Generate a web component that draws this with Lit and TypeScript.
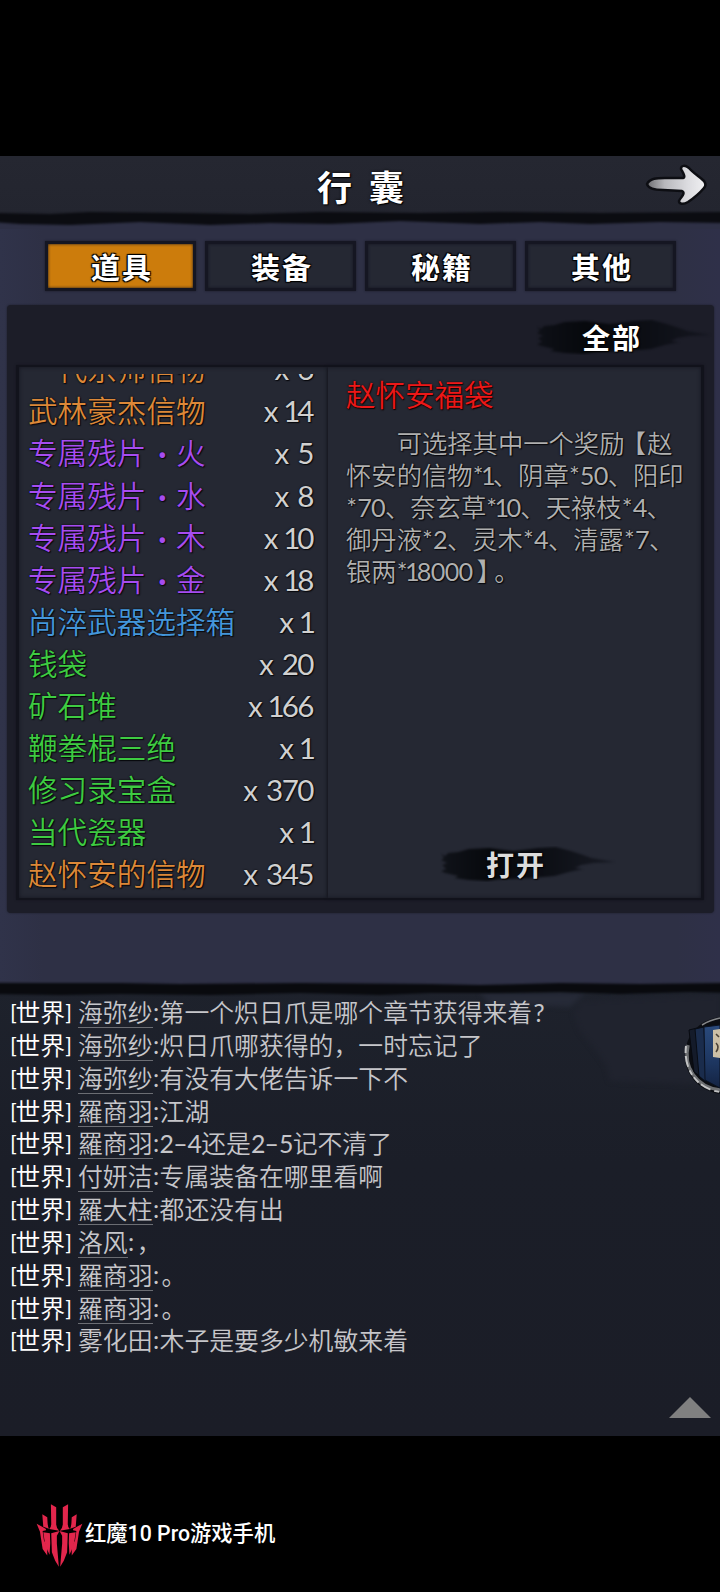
import { LitElement, html, svg, css } from "lit";
import { customElement, property, state } from "lit/decorators.js";
import { classMap } from "lit/directives/class-map.js";

interface Item {
  name: string;
  count: number;
  rank: "orange" | "purple" | "blue" | "green";
}

interface Message {
  name: string;
  text: string;
  plain?: boolean;
}

const ITEMS: Item[] = [
  { name: "一代宗师信物", count: 6, rank: "orange" },
  { name: "武林豪杰信物", count: 14, rank: "orange" },
  { name: "专属残片·火", count: 5, rank: "purple" },
  { name: "专属残片·水", count: 8, rank: "purple" },
  { name: "专属残片·木", count: 10, rank: "purple" },
  { name: "专属残片·金", count: 18, rank: "purple" },
  { name: "尚淬武器选择箱", count: 1, rank: "blue" },
  { name: "钱袋", count: 20, rank: "green" },
  { name: "矿石堆", count: 166, rank: "green" },
  { name: "鞭拳棍三绝", count: 1, rank: "green" },
  { name: "修习录宝盒", count: 370, rank: "green" },
  { name: "当代瓷器", count: 1, rank: "green" },
  { name: "赵怀安的信物", count: 345, rank: "orange" },
];

const DETAIL = [
  "　　可选择其中一个奖励【赵",
  "怀安的信物*1、阴章*50、阳印",
  "*70、奈玄草*10、天祿枝*4、",
  "御丹液*2、灵木*4、清露*7、",
  "银两*18000】。",
];

const MESSAGES: Message[] = [
  { name: "海弥纱", text: "第一个炽日爪是哪个章节获得来着?" },
  { name: "海弥纱", text: "炽日爪哪获得的，一时忘记了" },
  { name: "海弥纱", text: "有没有大佬告诉一下不" },
  { name: "羅商羽", text: "江湖" },
  { name: "羅商羽", text: "2–4还是2–5记不清了" },
  { name: "付妍洁", text: "专属装备在哪里看啊" },
  { name: "羅大柱", text: "都还没有出" },
  { name: "洛风", text: "，" },
  { name: "羅商羽", text: "。" },
  { name: "羅商羽", text: "。" },
  { name: "雾化田", text: "木子是要多少机敏来着", plain: true },
];

const cells = (text: string) =>
  [...text].map((c) => {
    if (c === "1") return html`<span class="c one">1</span>`;
    if (/[0-9]/.test(c)) return html`<span class="c num">${c}</span>`;
    if (c === "*") return html`<span class="c star">*</span>`;
    if (c === "–") return html`<span class="c dash">–</span>`;
    if (c === "?") return html`<span class="c num">?</span>`;
    if (c === "·") return html`<span class="c dot">·</span>`;
    if (c === "【") return html`<span class="c open">【</span>`;
    if (c === "】") return html`<span class="c close">】</span>`;
    return c;
  });

const latin = css`
  .c {
    display: inline-block;
    text-align: center;
    font-family: "Lato", sans-serif;
    font-weight: 400;
    white-space: nowrap;
    line-height: 1;
  }
  .num { width: 0.55em; }
  .one { width: 0.36em; text-indent: -0.11em; }
  .star { width: 0.44em; }
  .dash { width: 0.58em; }
  .dot { width: 1em; text-indent: 0.08em; font-weight: 700; }
  .open, .close { font-family: "Noto Sans CJK SC", sans-serif; font-weight: 350; }
  .open { width: 0.9em; text-indent: -0.2em; }
  .close { width: 0.86em; text-indent: 0.16em; }
`;

@customElement("ink-button")
class InkButton extends LitElement {
  @property() label = "";

  static styles = css`
    :host { display: grid; width: 176px; height: 36px; }
    svg, span { grid-area: 1 / 1; }
    svg { width: 176px; height: 36px; }
    span {
      font: 600 28px/36px "Noto Sans CJK SC", sans-serif;
      letter-spacing: 2px;
      padding-left: 46px;
      text-shadow: 0 0 2px #000, 1px 1px 1px #000;
    }
  `;

  render() {
    return html`
      <svg viewBox="0 0 172 36" preserveAspectRatio="none">
        <defs>
          <linearGradient id="g" x1="0" x2="1">
            <stop offset="0" stop-color="#0a0c11" stop-opacity=".75" />
            <stop offset=".28" stop-color="#07090d" />
            <stop offset=".6" stop-color="#0a0c12" stop-opacity=".9" />
            <stop offset="1" stop-color="#10121a" stop-opacity=".6" />
          </linearGradient>
          <filter id="b" color-interpolation-filters="sRGB"><feGaussianBlur stdDeviation=".9" /></filter>
        </defs>
        <path
          fill="url(#g)"
          filter="url(#b)"
          d="M1 8 5 10 8 7 18 6 28 3 48 2 72 5 96 2 113 1 128 5 140 9 148 12 171 16 150 17 138 19 132 22 140 23 126 26 112 30 90 32 60 33 46 35 28 34 14 32 18 30 5 27 1 25 6 23 2 19 7 17 1 14 4 12Z"
        />
      </svg>
      <span>${this.label}</span>
    `;
  }
}

@customElement("tab-bar")
class TabBar extends LitElement {
  @state() active = 0;
  tabs = ["道具", "装备", "秘籍", "其他"];

  static styles = css`
    :host { display: flex; gap: 9px; padding: 0 44px 0 45px; height: 52px; }
    button {
      all: unset;
      box-sizing: border-box;
      width: 151px;
      height: 50px;
      margin-top: 1px;
      border: 3px solid #151622;
      background: #252833;
      color: #fff;
      font: 600 29px/41px "Noto Sans CJK SC", sans-serif;
      letter-spacing: 2px;
      text-indent: 3px;
      text-align: center;
      box-shadow: 0 0 2px #191a27, inset 0 0 3px #14151f;
      text-shadow: -1px -1px 1px #000, 1px 1px 1px #000, 1px -1px 1px #000, -1px 1px 1px #000;
    }
    button.on { background: #cc7c0c; }
  `;

  render() {
    return this.tabs.map(
      (t, i) => html`<button class=${classMap({ on: i === this.active })} @click=${() => (this.active = i)}>${t}</button>`
    );
  }
}

@customElement("item-list")
class ItemList extends LitElement {
  static styles = [
    latin,
    css`
      :host { display: flex; flex-direction: column; justify-content: flex-end; overflow: hidden; height: 522px; }
      .row {
        display: flex;
        flex: none;
        justify-content: space-between;
        height: 42.05px;
        padding: 0 15px 0 9px;
        font: 350 29.6px/37px "Noto Sans CJK SC", sans-serif;
        text-shadow: 0 0 2px #000, 1px 1px 1px #0a0a10;
        white-space: nowrap;
      }
      .orange { color: #dc8838; }
      .purple { color: #a64cf0; }
      .blue { color: #4496da; }
      .green { color: #3ecb42; }
      .count { color: #d0d0d0; }
      .count .c { width: 0.53em; }
      .count .one { width: 0.37em; }
      .x { display: inline-block; font-family: "Lato", sans-serif; font-weight: 400; margin-right: 8px; line-height: 1; }
    `,
  ];

  render() {
    return ITEMS.map(
      (i) => html`<div class="row">
        <span class=${i.rank}>${cells(i.name)}</span>
        <span class="count"><span class="x">x</span>${cells(String(i.count))}</span>
      </div>`
    );
  }
}

@customElement("item-detail")
class ItemDetail extends LitElement {
  static styles = [
    latin,
    css`
      :host { display: flex; flex-direction: column; padding: 7px 0 0 18px; font-family: "Noto Sans CJK SC", sans-serif; }
      h2 {
        margin: 0 0 14px;
        font-size: 29.5px;
        line-height: 38px;
        font-weight: 350;
        color: #ec1818;
        text-shadow: 0 0 2px #200, 1px 1px 1px #100;
      }
      .line {
        font-size: 25.3px;
        line-height: 32px;
        height: 32px;
        font-weight: 350;
        color: #b0b0b0;
        white-space: pre;
        text-shadow: 0 0 2px #000, 1px 1px 1px #0a0a10;
      }
      ink-button { margin: 260px 0 0 94px; color: #dcdcdc; }
    `,
  ];

  render() {
    return html`
      <h2>赵怀安福袋</h2>
      ${DETAIL.map((l) => html`<div class="line">${cells(l)}</div>`)}
      <ink-button label="打开"></ink-button>
    `;
  }
}

@customElement("world-chat")
class WorldChat extends LitElement {
  static styles = [
    latin,
    css`
      :host {
        display: block;
        position: relative;
        height: 455px;
        box-sizing: border-box;
        padding-top: 15px;
        background: linear-gradient(#1e222c, #1b1e28 40%, #1b1d27);
      }
      .haze { position: absolute; left: 420px; top: 0; width: 300px; height: 120px; }
      .edge { position: absolute; left: 0; top: 0; width: 720px; height: 20px; }
      .msg {
        position: relative;
        display: flex;
        height: 32.85px;
        padding-left: 10px;
        font: 350 24.85px/31px "Noto Sans CJK SC", sans-serif;
        color: #c6c6ca;
        white-space: nowrap;
      }
      .tag { display: flex; width: 68px; color: #fff; }
      .br { width: 5.5px; font-family: "Lato", sans-serif; font-size: 22px; font-weight: 400; }
      .name { height: 31px; border-bottom: 1px solid #6b6d73; }
      .plain { border-color: transparent; }
      .colon { width: 7px; text-align: center; font-family: "Lato", sans-serif; font-weight: 400; }
      .mark { padding-left: 2px; }
      .books { position: absolute; right: 0; top: 35px; width: 38px; height: 80px; }
      .up { position: absolute; right: 9px; bottom: 18px; width: 42px; height: 21px; }
    `,
  ];

  render() {
    return html`
      <svg class="haze" viewBox="0 0 300 120">
        <defs><filter id="h" color-interpolation-filters="sRGB"><feGaussianBlur stdDeviation="2.5" /></filter></defs>
        <g filter="url(#h)">
          <path fill="#262a37" d="M60 12 H165 L150 26 110 24 90 30 70 24Z" />
          <path fill="#20232e" d="M160 20 300 14V104L190 100 186 84 176 70 160 50 154 34Z" />
        </g>
      </svg>
      <svg class="edge" viewBox="0 0 720 20">
        <defs>
          <filter id="e" x="-5%" y="-30%" width="110%" height="160%" color-interpolation-filters="sRGB"><feGaussianBlur stdDeviation="1.2" /></filter>
        </defs>
        <path fill="#2e3045" d="M0 0H720V6H0Z" />
        <path
          filter="url(#e)"
          fill="#090a0e"
          d="M-9 2H120L180 3 300 2 430 3 480 4 560 2 640 3 729 2V12L690 11 620 13 560 11 500 12 430 12 380 14 300 12 210 14 120 13 60 14-9 13Z"
        />
      </svg>
      ${MESSAGES.map(
        (m) => html`<div class="msg">
          <span class="tag"><span class="br">[</span>世界<span class="br">]</span></span>
          <span class=${classMap({ name: true, plain: !!m.plain })}>${m.name}</span>
          <span class="colon">:</span>
          <span class=${classMap({ mark: m.text.length === 1 })}>${cells(m.text)}</span>
        </div>`
      )}
      <svg class="books" viewBox="0 0 38 80">
        <defs>
          <linearGradient id="bk" x1="0" y1="0" x2="0" y2="1">
            <stop offset="0" stop-color="#2a4a7c" /><stop offset=".6" stop-color="#1d3660" /><stop offset="1" stop-color="#142342" />
          </linearGradient>
          <filter id="r" color-interpolation-filters="sRGB"><feGaussianBlur stdDeviation=".6" /></filter>
        </defs>
        <g filter="url(#r)">
          <path fill="#0b0d12" d="M38 1C16 4 3 20 3 40S18 75 38 78Z" />
          <path fill="none" stroke="#6c6e71" stroke-width="3.5" d="M6 29C1 51 14 71 38 74" />
          <path fill="none" stroke="#c2c3c4" stroke-width="2" stroke-dasharray="7 3 11 4 5 3" d="M4 30C1 53 15 73 38 76" />
          <path fill="none" stroke="#85878a" stroke-width="1.5" d="M20 9Q28 4 38 2" />
          <path fill="#141b2a" stroke="#080a10" d="M7 14 15 12 18 60 12 56Z" />
          <path fill="#1a2c4c" stroke="#080c14" d="M13 13 22 11 24 66 17 60Z" />
          <path fill="url(#bk)" stroke="#0a1222" d="M22 11 38 9V72L23 64Z" />
          <path fill="#cbbfa6" d="M31 14 38 13V42L31 41Z" />
          <path fill="none" stroke="#4b4236" stroke-width="1.6" d="M34 18 37 21M34 27Q38 31 34 36" />
        </g>
      </svg>
      <svg class="up" viewBox="0 0 42 21"><path fill="#808080" d="M21 0 42 21H0Z" /></svg>
    `;
  }
}

const logoHalf = svg`
  <path d="M45 3 61 12V64Q62 76 70 83L40 78Q46 74 46 62Z" />
  <path d="M19 33 34 42 35 60Q36 72 39 77L22 71Z" />
  <path d="M2 62 20 72 30 78V82L20 84 24 112 34 132V158L20 138 15 106 12 86Z" />
  <path d="M22 88 42 91 43 120 41 156 29 130 25 108Z" />
  <path d="M46 91 71 84 63 98V122L69 192 58 174 48 148Z" />
`;

@customElement("app-root")
class AppRoot extends LitElement {
  static styles = css`
    :host {
      display: flex;
      flex-direction: column;
      box-sizing: border-box;
      width: 720px;
      height: 1592px;
      padding-top: 156px;
      overflow: hidden;
      background: #000;
      color: #fff;
      font-family: "Noto Sans CJK SC", sans-serif;
    }
    header {
      display: flex;
      align-items: flex-start;
      height: 60px;
      background: linear-gradient(#252731, #23252f);
      position: relative;
    }
    h1 {
      flex: 1;
      margin: 0;
      padding-left: 317px;
      font-size: 35px;
      line-height: 59px;
      font-weight: 600;
      letter-spacing: 17px;
      text-shadow: 0 0 3px #000, 1px 1px 1px #000;
    }
    .back { width: 62px; height: 42px; margin: 8px 13px 0 0; }
    .edge { position: absolute; left: 0; top: 53px; width: 720px; height: 20px; }
    main { height: 741px; padding-top: 24px; background: linear-gradient(90deg, #30334a, #2e3045 6%, #2e3045 94%, #2f3049); }
    .panel {
      margin: 13px 6px 0 7px;
      height: 608px;
      box-sizing: border-box;
      border-radius: 4px;
      background: #1c1d28;
      padding: 17px 10px 12px 9px;
      box-shadow: 0 0 2px #1c1d28;
    }
    .filter { display: flex; justify-content: flex-end; height: 43px; }
    .filter ink-button { margin: -3px -8px 0 0; }
    .frame {
      display: grid;
      grid-template-columns: 309px 1fr;
      height: 535px;
      box-sizing: border-box;
      border: 2px solid #12131c;
      border-left-width: 3px;
      border-right-width: 3px;
      background: #252833;
      box-shadow: 0 0 2px #14151e, inset 0 0 4px #151620;
    }
    item-list { margin-top: 7px; }
    item-detail { box-shadow: -1px 0 3px 0 #12131b; }
    footer { display: flex; align-items: center; padding: 67px 0 0 36px; height: 65px; }
    .logo { width: 47px; height: 65px; fill: #e2264c; }
    .device { font: 500 21.3px/30px "Roboto", "Noto Sans CJK SC", sans-serif; margin: -3px 0 0 2px; white-space: nowrap; }
  `;

  render() {
    return html`
      <header>
        <h1>行囊</h1>
        <svg class="back" viewBox="0 0 62 42">
          <defs>
            <linearGradient id="ar"><stop offset="0" stop-color="#6e6e72" /><stop offset=".3" stop-color="#b8b8bc" /><stop offset=".7" stop-color="#dcdce0" /><stop offset="1" stop-color="#f0f0f2" /></linearGradient>
            <filter id="af" x="-10%" y="-10%" width="120%" height="120%" color-interpolation-filters="sRGB"><feGaussianBlur stdDeviation=".7" /></filter>
          </defs>
          <path
            fill="url(#ar)"
            stroke="#0d0e13"
            stroke-width="2.5"
            stroke-linejoin="round"
            filter="url(#af)"
            d="M2 20C5 14 12 14 20 14L38 14C41 13 38 9 36 5 36 1 40 1 44 4 48 9 54 12 59 17 61 20 61 22 59 24 54 30 49 34 43 38 38 41 34 40 34 37 36 33 41 29 37 27L18 26C10 26 3 24 2 20Z"
          />
        </svg>
        <svg class="edge" viewBox="0 0 720 20">
          <defs>
            <filter id="e" x="-5%" y="-30%" width="110%" height="160%" color-interpolation-filters="sRGB"><feGaussianBlur stdDeviation="1.3" /></filter>
          </defs>
          <path fill="#2e3045" d="M0 10H720V20H0Z" />
          <path
            filter="url(#e)"
            fill="#0b0c11"
            d="M-9 4 50 5 90 3 180 4 250 5 320 3 420 4 500 3 600 4 729 3V14L660 13 590 15 540 13 480 15 400 12 330 15 270 14 210 16 140 13 70 16 20 15-9 13Z"
          />
        </svg>
      </header>
      <main>
        <tab-bar></tab-bar>
        <section class="panel">
          <div class="filter"><ink-button label="全部"></ink-button></div>
          <div class="frame">
            <item-list></item-list>
            <item-detail></item-detail>
          </div>
        </section>
      </main>
      <world-chat></world-chat>
      <footer>
        <svg class="logo" viewBox="0 0 142 195">
          <g>${logoHalf}</g>
          <g transform="translate(142 0) scale(-1 1)">${logoHalf}</g>
        </svg>
        <span class="device">红魔10 Pro游戏手机</span>
      </footer>
    `;
  }
}
